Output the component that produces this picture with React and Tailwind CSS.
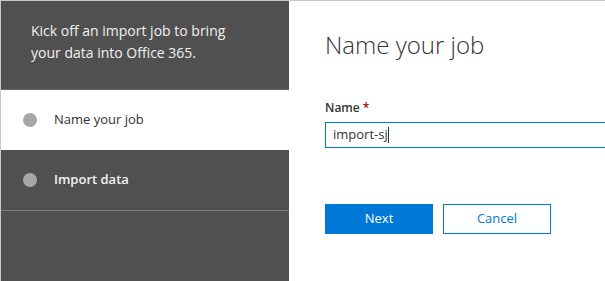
export default function App() {
  const font = { fontFamily: '"Segoe UI", "Open Sans", "Noto Sans", sans-serif' };
  return (
    <div className="w-[605px] h-[281px] overflow-hidden bg-white flex border-t border-l border-[#c8c8c8]" style={font}>
      <div className="w-[288px] shrink-0 bg-[#505050] flex flex-col">
        <div className="h-[89px] border-b border-[#6a6a6a] pl-[30px] pt-[19px]">
          <p className="w-[215px] text-[14px] leading-[22px] text-[#f0f0f0]">
            Kick off an import job to bring your data into Office 365.
          </p>
        </div>
        <div className="h-[60px] bg-white flex items-center pl-[22px]">
          <span className="w-[14px] h-[14px] rounded-full bg-[#a6a6a6]" />
          <span className="ml-[17px] text-[13px] text-[#333333]">Name your job</span>
        </div>
        <div className="h-[61px] border-b border-[#7a7a7a] flex items-center pl-[22px]">
          <span className="w-[14px] h-[14px] rounded-full bg-[#a6a6a6]" />
          <span className="ml-[17px] text-[13px] font-semibold text-[#f4f4f4]">Import data</span>
        </div>
        <div className="flex-1" />
      </div>
      <div className="flex-1 pl-[36px] pt-[24px]">
        <div className="text-[24px] font-light leading-[40px] text-[#333333]">Name your job</div>
        <div className="mt-[34px] text-[12px] font-semibold text-[#333333] leading-[18px]">
          Name <span className="text-[#a80000]">*</span>
        </div>
        <div className="mt-[5px] h-[26px] w-[300px] border border-[#0078d7] flex items-center pl-[7px] text-[13px] text-[#333333]">
          import-sj<span className="w-px h-[16px] bg-[#333333]" />
        </div>
        <div className="mt-[56px] flex gap-[10px]">
          <button className="w-[108px] h-[30px] bg-[#0078d7] text-white text-[13px]">Next</button>
          <button className="w-[108px] h-[30px] border border-[#0078d7] text-[#0078d7] text-[13px] bg-white">Cancel</button>
        </div>
      </div>
    </div>
  );
}
